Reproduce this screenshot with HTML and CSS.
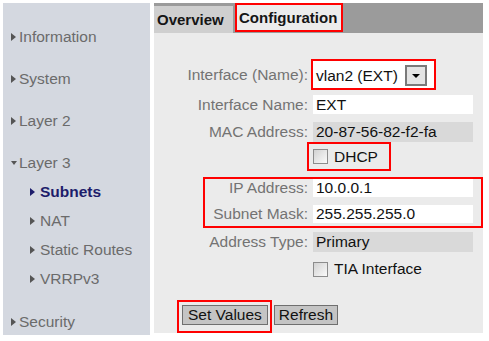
FILE: index.html
```html
<!DOCTYPE html>
<html lang="en">
<head>
  <meta charset="UTF-8">
  <title>Layer 3 - Subnets</title>
  <link rel="stylesheet" href="styles.css">
</head>
<body>
  <div class="page">
    <div class="sidebar">
      <div class="nav-item first"><span class="tri"></span>Information</div>
      <div class="nav-item"><span class="tri"></span>System</div>
      <div class="nav-item"><span class="tri"></span>Layer 2</div>
      <div class="nav-item"><span class="tri open"></span>Layer 3</div>
      <div class="nav-item sub active"><span class="tri"></span>Subnets</div>
      <div class="nav-item sub"><span class="tri"></span>NAT</div>
      <div class="nav-item sub"><span class="tri"></span>Static Routes</div>
      <div class="nav-item sub"><span class="tri"></span>VRRPv3</div>
      <div class="nav-item last"><span class="tri"></span>Security</div>
    </div>

    <div class="content">
      <div class="tabs">
        <div class="tab">Overview</div>
        <div class="tab current">Configuration</div>
      </div>

      <div class="form">
        <div class="row r-iface">
          <span class="label">Interface (Name):</span>
          <div class="select">
            <span>vlan2 (EXT)</span>
            <span class="drop"><span class="arrow"></span></span>
          </div>
        </div>
        <div class="row r-name">
          <span class="label">Interface Name:</span>
          <div class="field">EXT</div>
        </div>
        <div class="row r-mac">
          <span class="label">MAC Address:</span>
          <div class="field ro">20-87-56-82-f2-fa</div>
        </div>
        <div class="row r-dhcp">
          <span></span>
          <div class="check hl"><span class="box"></span>DHCP</div>
        </div>

        <div class="group">
          <div class="row r-ip">
            <span class="label">IP Address:</span>
            <div class="field">10.0.0.1</div>
          </div>
          <div class="row r-mask">
            <span class="label">Subnet Mask:</span>
            <div class="field">255.255.255.0</div>
          </div>
        </div>

        <div class="row r-type">
          <span class="label">Address Type:</span>
          <div class="field ro">Primary</div>
        </div>
        <div class="row r-tia">
          <span></span>
          <div class="check"><span class="box"></span>TIA Interface</div>
        </div>

        <div class="buttons">
          <div class="btn-mark"><button class="btn">Set Values</button></div>
          <button class="btn refresh">Refresh</button>
        </div>
      </div>
    </div>
  </div>
</body>
</html>
```

FILE: styles.css
```css
body {
  margin: 0;
  background: #fff;
  font-family: "Liberation Sans", Arial, sans-serif;
  font-size: 15.5px;
}
.page {
  display: flex;
  gap: 4px;
  padding: 3px 6px 0 3px;
}

/* sidebar */
.sidebar {
  width: 147px;
  height: 332px;
  background: #d4d8e0;
  padding-top: 19px;
  box-sizing: border-box;
}
.nav-item {
  display: flex;
  align-items: center;
  height: 29px;
  margin-top: 13px;
  padding-left: 8px;
  color: #6b6b6b;
}
.nav-item.first {
  margin-top: 0;
}
.nav-item.last {
  margin-top: 14px;
}
.nav-item.sub {
  margin-top: 0;
  padding-left: 27px;
}
.nav-item.sub .tri {
  margin-right: 5px;
}
.nav-item.active {
  color: #1d1d6b;
  font-weight: bold;
}
.tri {
  width: 0;
  height: 0;
  border-left: 5px solid #555;
  border-top: 4px solid transparent;
  border-bottom: 4px solid transparent;
  margin-right: 3px;
}
.nav-item.active .tri {
  border-left-color: #1d1d6b;
}
.tri.open {
  border-left: 3px solid transparent;
  border-right: 3px solid transparent;
  border-top: 4px solid #555;
  border-bottom: 0;
  margin-right: 2px;
}

/* content */
.content {
  width: 329px;
  height: 330px;
  background: #ebebeb;
}
.tabs {
  display: flex;
  align-items: flex-start;
  height: 30px;
  background: #9b9b9b;
}
.tab {
  margin-top: 3px;
  width: 79px;
  height: 27px;
  line-height: 27px;
  padding-left: 3px;
  box-sizing: border-box;
  background: #cfcfcf;
  color: #151515;
  font-weight: bold;
  font-size: 15px;
}
.tab.current {
  margin-top: 0;
  margin-left: 2px;
  width: 108px;
  height: 29px;
  line-height: 25px;
  padding-left: 2px;
  background: #ececec;
  border: 2px solid #f00;
}

.form {
  padding-top: 26px;
}
.row {
  display: grid;
  grid-template-columns: 154px 160px;
  column-gap: 5px;
  align-items: center;
}
.label {
  text-align: right;
  color: #737373;
}
.field {
  height: 19px;
  line-height: 19px;
  padding-left: 3px;
  background: #fff;
  color: #111;
}
.field.ro {
  height: 20px;
  line-height: 20px;
  background: #d9d9d9;
}

.select {
  display: flex;
  align-items: center;
  justify-content: space-between;
  width: 125px;
  height: 31px;
  margin-left: -2px;
  padding: 2px 7px 0 3px;
  box-sizing: border-box;
  background: #fff;
  border: 2px solid #f00;
  color: #111;
}
.drop {
  display: flex;
  align-items: center;
  justify-content: center;
  width: 22px;
  height: 21px;
  box-sizing: border-box;
  border: 2px solid #7a7a7a;
  background: #e4e4e4;
}
.arrow {
  border-left: 4px solid transparent;
  border-right: 4px solid transparent;
  border-top: 4px solid #000;
}

.r-name {
  margin-top: 5px;
}
.r-mac {
  margin-top: 8px;
}
.r-dhcp {
  margin-top: 0;
}
.check {
  display: flex;
  align-items: center;
  color: #111;
}
.check.hl {
  width: 84px;
  height: 29px;
  margin-left: -6px;
  padding-left: 4px;
  box-sizing: border-box;
  border: 2px solid #f00;
}
.box {
  width: 15px;
  height: 15px;
  box-sizing: border-box;
  border: 1px solid #8c8c8c;
  background: linear-gradient(135deg, #d2d2d2, #fafafa);
  margin-right: 6px;
}

.group {
  margin: 6px 0 0 49px;
  border: 2px solid #f00;
  padding: 0 8px 3px 0;
}
.group .row {
  grid-template-columns: 103px 160px;
}
.group .field {
  height: 18px;
  line-height: 18px;
}
.r-mask {
  margin-top: 8px;
}
.r-type {
  margin-top: 4px;
}
.r-tia {
  margin-top: 8px;
  height: 18px;
}

.buttons {
  display: flex;
  align-items: flex-start;
  margin: 22px 0 0 23px;
}
.btn-mark {
  border: 2px solid #f00;
  padding: 3px 2px 6px 3px;
}
.btn {
  height: 20px;
  padding: 0 5px;
  font-family: inherit;
  font-size: 15.5px;
  line-height: 18px;
  color: #111;
  background: #c4c4c4;
  border: 1px solid #6f6f6f;
  border-radius: 0;
}
.btn.refresh {
  margin: 5px 0 0 2px;
  padding: 0 4px;
}
```
